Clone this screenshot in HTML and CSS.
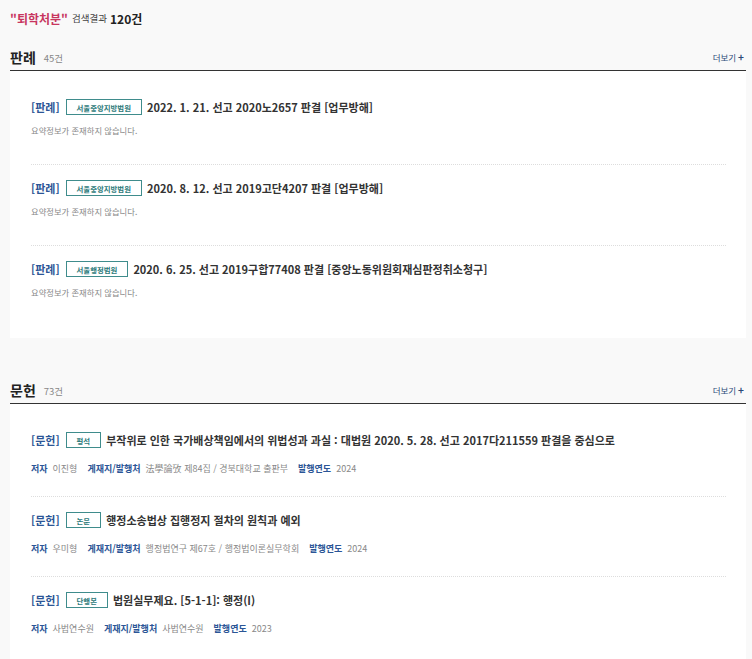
FILE: index.html
```html
<!DOCTYPE html>
<html lang="ko">
<head>
<meta charset="utf-8">
<link rel="stylesheet" href="styles.css">
</head>
<body>
<div class="page">
  <div class="result-summary">
    <span class="keyword">"퇴학처분"</span>
    <span class="result-label">검색결과</span>
    <span class="result-count">120건</span>
  </div>

  <section class="section">
    <div class="section-head">
      <h2 class="section-title">판례</h2>
      <span class="section-count">45건</span>
      <a class="more">더보기 <span class="plus">+</span></a>
    </div>
    <div class="card">
      <div class="item">
        <div class="item-title">
          <span class="label">[판례]</span>
          <span class="badge">서울중앙지방법원</span>
          <span class="title-text">2022. 1. 21. 선고 2020노2657 판결 [업무방해]</span>
        </div>
        <p class="summary">요약정보가 존재하지 않습니다.</p>
      </div>
      <div class="item">
        <div class="item-title">
          <span class="label">[판례]</span>
          <span class="badge">서울중앙지방법원</span>
          <span class="title-text">2020. 8. 12. 선고 2019고단4207 판결 [업무방해]</span>
        </div>
        <p class="summary">요약정보가 존재하지 않습니다.</p>
      </div>
      <div class="item">
        <div class="item-title">
          <span class="label">[판례]</span>
          <span class="badge">서울행정법원</span>
          <span class="title-text">2020. 6. 25. 선고 2019구합77408 판결 [중앙노동위원회재심판정취소청구]</span>
        </div>
        <p class="summary">요약정보가 존재하지 않습니다.</p>
      </div>
    </div>
  </section>

  <section class="section section-second">
    <div class="section-head">
      <h2 class="section-title">문헌</h2>
      <span class="section-count">73건</span>
      <a class="more">더보기 <span class="plus">+</span></a>
    </div>
    <div class="card">
      <div class="item item-doc">
        <div class="item-title">
          <span class="label">[문헌]</span>
          <span class="badge">평석</span>
          <span class="title-text">부작위로 인한 국가배상책임에서의 위법성과 과실 : 대법원 2020. 5. 28. 선고 2017다211559 판결을 중심으로</span>
        </div>
        <div class="meta">
          <span class="meta-key">저자</span><span class="meta-val">이진형</span>
          <span class="meta-key">게재지/발행처</span><span class="meta-val">法學論攷 제84집 / 경북대학교 출판부</span>
          <span class="meta-key">발행연도</span><span class="meta-val">2024</span>
        </div>
      </div>
      <div class="item item-doc">
        <div class="item-title">
          <span class="label">[문헌]</span>
          <span class="badge">논문</span>
          <span class="title-text">행정소송법상 집행정지 절차의 원칙과 예외</span>
        </div>
        <div class="meta">
          <span class="meta-key">저자</span><span class="meta-val">우미형</span>
          <span class="meta-key">게재지/발행처</span><span class="meta-val">행정법연구 제67호 / 행정법이론실무학회</span>
          <span class="meta-key">발행연도</span><span class="meta-val">2024</span>
        </div>
      </div>
      <div class="item item-doc">
        <div class="item-title">
          <span class="label">[문헌]</span>
          <span class="badge">단행본</span>
          <span class="title-text">법원실무제요. [5-1-1]: 행정(I)</span>
        </div>
        <div class="meta">
          <span class="meta-key">저자</span><span class="meta-val">사법연수원</span>
          <span class="meta-key">게재지/발행처</span><span class="meta-val">사법연수원</span>
          <span class="meta-key">발행연도</span><span class="meta-val">2023</span>
        </div>
      </div>
    </div>
  </section>
</div>
</body>
</html>
```

FILE: styles.css
```css
* { box-sizing: border-box; }
html, body {
  margin: 0;
  padding: 0;
  background: #f9f9f9;
  font-family: "Noto Sans CJK KR", "Noto Sans", sans-serif;
  color: #333;
}
.page {
  width: 736px;
  margin-left: 10px;
}
.result-summary {
  height: 36px;
  display: flex;
  align-items: center;
  gap: 3px;
}
.keyword {
  color: #c8365f;
  font-weight: 700;
  font-size: 12px;
}
.result-label {
  color: #444;
  font-size: 9.5px;
  margin-left: 1px;
}
.result-count {
  font-weight: 700;
  font-size: 12px;
  color: #222;
}
.section-head {
  display: flex;
  align-items: center;
  height: 28px;
  margin-top: 7px;
  border-bottom: 1px solid #333;
}
.section-second .section-head {
  margin-top: 38px;
}
.section-title {
  margin: 0;
  font-size: 14px;
  font-weight: 700;
  color: #222;
  line-height: 1;
}
.section-count {
  font-size: 9.5px;
  color: #888;
  margin-left: 8px;
  margin-top: 2px;
}
.more {
  margin-left: auto;
  font-size: 8.5px;
  color: #2c4a78;
  display: flex;
  align-items: center;
  gap: 2px;
  margin-right: 2px;
}
.plus {
  font-weight: 700;
  font-size: 10px;
}
.card {
  background: #fff;
  padding: 13px 20px 12px 21px;
}
.item {
  padding: 13px 0 27px;
  border-bottom: 1px dotted #ddd;
}
.item:last-child {
  border-bottom: none;
}
.item-title {
  height: 20px;
  display: flex;
  align-items: center;
  white-space: nowrap;
}
.label {
  color: #2b5596;
  font-weight: 700;
  font-size: 11px;
}
.badge {
  margin-left: 6px;
  margin-right: 5px;
  height: 16px;
  display: inline-flex;
  align-items: center;
  padding: 0 10px;
  border: 1px solid #3f8c8c;
  color: #2d7a7a;
  font-size: 7.4px;
  font-weight: 700;
}
.title-text {
  font-weight: 700;
  font-size: 11px;
  color: #333;
}
.summary {
  margin: 6px 0 0;
  height: 14px;
  line-height: 14px;
  font-size: 8.3px;
  color: #888;
}
.item-doc {
  padding-bottom: 20px;
}
.meta {
  margin-top: 10px;
  height: 16px;
  display: flex;
  align-items: center;
  font-size: 9px;
  white-space: nowrap;
}
.meta-key {
  color: #2b5596;
  font-weight: 700;
  margin-right: 5px;
}
.meta-val {
  color: #888;
  margin-right: 10px;
}
```
